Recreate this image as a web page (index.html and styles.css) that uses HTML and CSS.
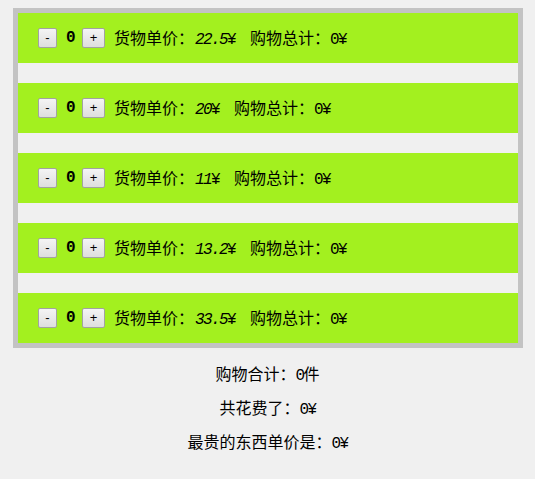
FILE: index.html
```html
<!DOCTYPE html>
<html lang="zh-CN">
<head>
<meta charset="utf-8">
<title>购物车</title>
<link rel="stylesheet" href="styles.css">
</head>
<body>
<div class="cart">
  <div class="item">
    <button class="btn btn-minus">-</button>
    <b class="count">0</b>
    <button class="btn btn-plus">+</button>
    <span class="info"><span class="label">货物单价：</span><i class="num price">22.5</i><span class="num">¥</span><span class="label total">购物总计：</span><span class="num">0¥</span></span>
  </div>
  <div class="item">
    <button class="btn btn-minus">-</button>
    <b class="count">0</b>
    <button class="btn btn-plus">+</button>
    <span class="info"><span class="label">货物单价：</span><i class="num price">20</i><span class="num">¥</span><span class="label total">购物总计：</span><span class="num">0¥</span></span>
  </div>
  <div class="item">
    <button class="btn btn-minus">-</button>
    <b class="count">0</b>
    <button class="btn btn-plus">+</button>
    <span class="info"><span class="label">货物单价：</span><i class="num price">11</i><span class="num">¥</span><span class="label total">购物总计：</span><span class="num">0¥</span></span>
  </div>
  <div class="item">
    <button class="btn btn-minus">-</button>
    <b class="count">0</b>
    <button class="btn btn-plus">+</button>
    <span class="info"><span class="label">货物单价：</span><i class="num price">13.2</i><span class="num">¥</span><span class="label total">购物总计：</span><span class="num">0¥</span></span>
  </div>
  <div class="item">
    <button class="btn btn-minus">-</button>
    <b class="count">0</b>
    <button class="btn btn-plus">+</button>
    <span class="info"><span class="label">货物单价：</span><i class="num price">33.5</i><span class="num">¥</span><span class="label total">购物总计：</span><span class="num">0¥</span></span>
  </div>
</div>
<div class="summary">
  <p>购物合计：<span class="num">0</span>件</p>
  <p>共花费了：<span class="num">0¥</span></p>
  <p>最贵的东西单价是：<span class="num">0¥</span></p>
</div>
</body>
</html>
```

FILE: styles.css
```css
html, body {
  background: #f0f0f0;
}
body {
  margin: 8px;
  font-family: "Noto Sans CJK SC", sans-serif;
  font-size: 16px;
  color: #000;
}
.cart {
  width: 500px;
  margin-left: 5px;
  border: 5px solid #c3c3c3;
}
.item {
  display: flex;
  align-items: center;
  height: 50px;
  padding-left: 20px;
  background: #a3f01f;
  margin-bottom: 20px;
}
.item:last-child {
  margin-bottom: 0;
}
.btn {
  box-sizing: border-box;
  height: 20px;
  padding: 0;
  margin: 0;
  font-family: "Liberation Sans", sans-serif;
  font-size: 13px;
  line-height: 16px;
  color: #000;
  background: linear-gradient(#f4f4f4, #dedede);
  border: 1px solid #a2a2a2;
  border-radius: 2px;
}
.btn-minus {
  width: 19px;
}
.btn-plus {
  width: 23px;
}
.count {
  width: 8px;
  margin: 0 8px 0 9px;
  text-align: center;
  font-family: "Liberation Mono", monospace;
  font-size: 16px;
  font-weight: bold;
  line-height: 18px;
}
.info {
  margin-left: 9px;
  line-height: 18px;
  white-space: nowrap;
}
.num {
  font-family: "Liberation Mono", monospace;
  letter-spacing: -1.6px;
}
.price {
  margin-left: 1px;
}
.total {
  margin-left: 15px;
}
.summary p {
  height: 18px;
  margin: 16px 0;
  line-height: 18px;
  text-align: center;
}
```
